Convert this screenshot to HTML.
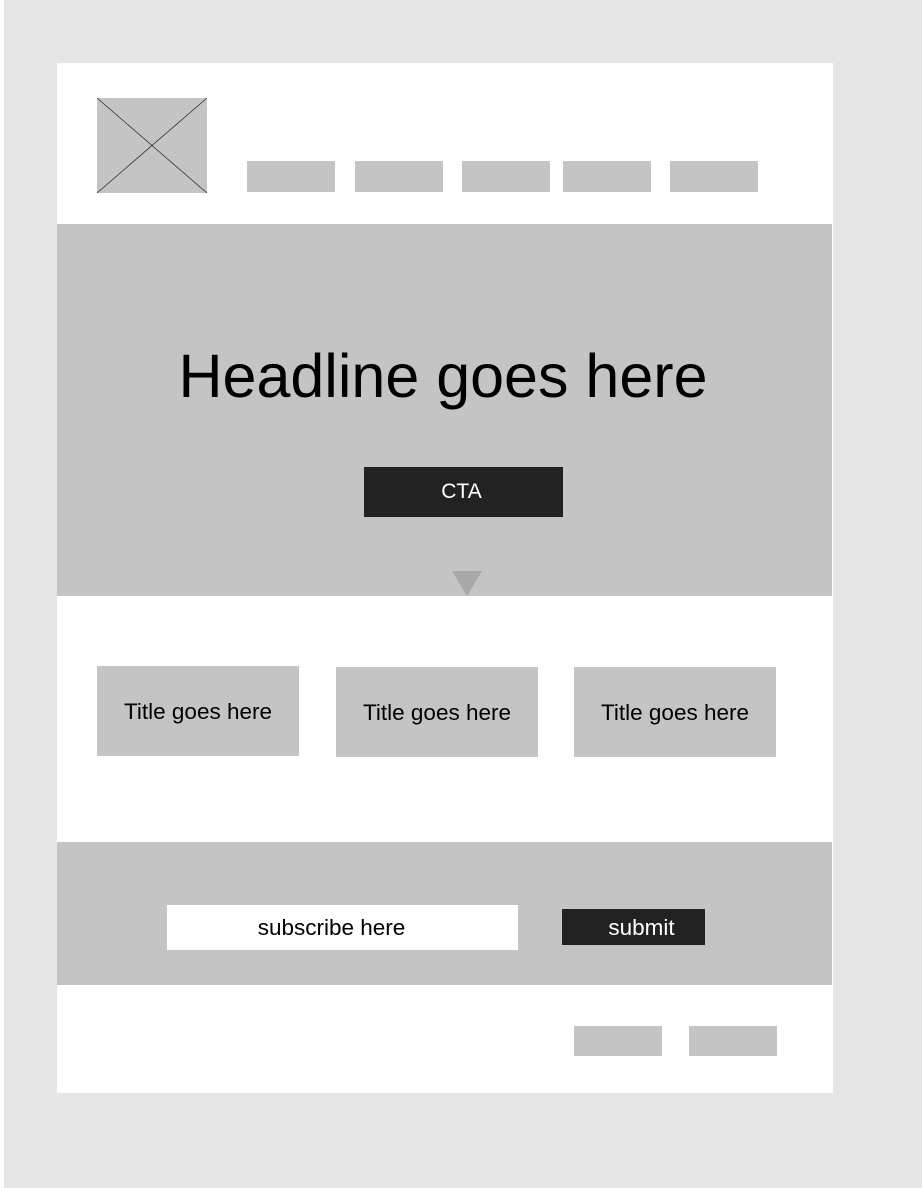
<!DOCTYPE html>
<html><head><style>
*{margin:0;padding:0;box-sizing:border-box}
body{width:922px;height:1188px;background:#e5e5e5;position:relative;overflow:hidden;font-family:"Liberation Sans",sans-serif}
.a{position:absolute}
.g{background:#c4c4c4}
.t{display:flex;align-items:center;justify-content:center}
</style></head><body>
<div class="a" style="left:0;top:0;width:4px;height:1188px;background:#fff"></div>
<div class="a" style="left:57px;top:63px;width:776px;height:1030px;background:#fff"></div>
<svg class="a" style="left:97px;top:98px" width="110" height="95"><rect width="110" height="95" fill="#c4c4c4"/><line x1="0" y1="0" x2="110" y2="95" stroke="#333" stroke-width="0.8"/><line x1="110" y1="0" x2="0" y2="95" stroke="#333" stroke-width="0.8"/></svg>
<div class="a g" style="left:247px;top:161px;width:88px;height:31px"></div>
<div class="a g" style="left:355px;top:161px;width:88px;height:31px"></div>
<div class="a g" style="left:462px;top:161px;width:88px;height:31px"></div>
<div class="a g" style="left:563px;top:161px;width:88px;height:31px"></div>
<div class="a g" style="left:670px;top:161px;width:88px;height:31px"></div>
<div class="a g" style="left:57px;top:224px;width:775px;height:372px"></div>
<div class="a t" style="left:57px;top:338px;width:772px;height:76px;font-size:61px;color:#000">Headline goes here</div>
<div class="a t" style="left:364px;top:467px;width:199px;height:50px;background:#222;color:#fff;font-size:21px;padding-right:4px">CTA</div>
<svg class="a" style="left:452px;top:571px" width="30" height="25"><polygon points="0,0 30,0 15,25" fill="#a8a8a8"/></svg>
<div class="a g t" style="left:97px;top:666px;width:202px;height:90px;font-size:22.5px;padding-top:2px">Title goes here</div>
<div class="a g t" style="left:336px;top:667px;width:202px;height:90px;font-size:22.5px;padding-top:1px">Title goes here</div>
<div class="a g t" style="left:574px;top:667px;width:202px;height:90px;font-size:22.5px;padding-top:1px">Title goes here</div>
<div class="a g" style="left:57px;top:842px;width:775px;height:143px"></div>
<div class="a" style="left:167px;top:905px;width:351px;height:45px;background:#fff"></div>
<div class="a t" style="left:167px;top:905px;width:329px;height:45px;font-size:22.5px">subscribe here</div>
<div class="a" style="left:562px;top:909px;width:143px;height:36px;background:#222"></div>
<div class="a t" style="left:570px;top:910px;width:143px;height:36px;color:#fff;font-size:22.5px">submit</div>
<div class="a g" style="left:574px;top:1026px;width:88px;height:30px"></div>
<div class="a g" style="left:689px;top:1026px;width:88px;height:30px"></div>
</body></html>
